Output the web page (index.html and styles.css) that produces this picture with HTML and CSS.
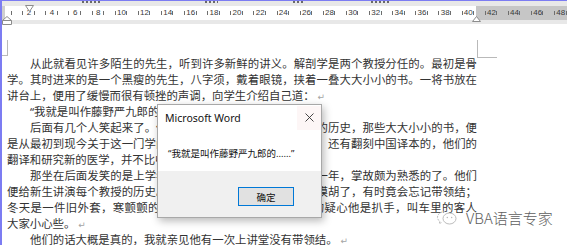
FILE: index.html
```html
<!DOCTYPE html>
<html lang="zh-CN">
<head>
  <meta charset="UTF-8">
  <meta name="viewport" content="width=device-width, initial-scale=1.0">
  <title>藤野先生 - Word</title>
  <link rel="stylesheet" href="styles.css">
</head>
<body>
  <div class="ruler">
    <div class="ribbon-cut">
      <span class="cut c1"></span>
      <span class="cut c2"></span>
      <span class="cut c3"></span>
      <span class="cut c4"></span>
    </div>
    <div class="ruler-strip">
      <div class="ruler-scale">
        <span></span><span></span><span>2</span><span></span><span>4</span><span></span><span>6</span><span></span><span>8</span><span></span>
        <span>10</span><span></span><span>12</span><span></span><span>14</span><span></span><span>16</span><span></span><span>18</span><span></span>
        <span>20</span><span></span><span>22</span><span></span><span>24</span><span></span><span>26</span><span></span><span>28</span><span></span>
        <span>30</span><span></span><span>32</span><span></span><span>34</span><span></span><span>36</span><span></span><span>38</span><span></span>
        <span>40</span><span></span><span>42</span><span></span><span>44</span><span></span><span>46</span><span></span><span>48</span>
      </div>
    </div>
    <!-- indent markers -->
    <svg class="mark first-indent" width="9" height="7" viewBox="0 0 9 7"><polygon points="0.5,0.5 8.5,0.5 4.5,6.5" fill="#fff" stroke="#8c8c8c"/></svg>
    <svg class="mark hang-indent" width="10" height="9" viewBox="0 0 10 9"><polygon points="5,0.5 9.5,4.5 9.5,8.5 0.5,8.5 0.5,4.5" fill="#fff" stroke="#8c8c8c"/><line x1="0.5" y1="4.5" x2="9.5" y2="4.5" stroke="#8c8c8c"/></svg>
    <svg class="mark right-indent" width="9" height="6" viewBox="0 0 9 6"><polygon points="4.5,0.5 8.5,5.5 0.5,5.5" fill="#fff" stroke="#8c8c8c"/></svg>
  </div>

  <div class="page">
    <div class="corners">
      <span class="corner-l"></span>
      <span class="corner-r"></span>
    </div>

    <div class="text">
      <p class="ln ind">从此就看见许多陌生的先生，听到许多新鲜的讲义。解剖学是两个教授分任的。最初是骨</p>
      <p class="ln">学。其时进来的是一个黑瘦的先生，八字须，戴着眼镜，挟着一叠大大小小的书。一将书放在</p>
      <p class="ln end">讲台上，便用了缓慢而很有顿挫的声调，向学生介绍自己道：<span class="pm">↵</span></p>
      <p class="ln ind end">“我就是叫作藤野严九郎的……”<span class="pm">↵</span></p>
      <p class="ln ind">后面有几个人笑起来了。他接着便讲述解剖学在日本发达的历史，那些大大小小的书，便</p>
      <p class="ln">是从最初到现今关于这一门学问的著作。起初有几本是线装的；还有翻刻中国译本的，他们的</p>
      <p class="ln end">翻译和研究新的医学，并不比中国早。<span class="pm">↵</span></p>
      <p class="ln ind">那坐在后面发笑的是上学年不及格的留级学生，在校已经一年，掌故颇为熟悉的了。他们</p>
      <p class="ln">便给新生讲演每个教授的历史。这藤野先生，据说是穿衣服太模胡了，有时竟会忘记带领结；</p>
      <p class="ln">冬天是一件旧外套，寒颤颤的，有一回上火车去，致使管车的疑心他是扒手，叫车里的客人</p>
      <p class="ln end">大家小心些。<span class="pm">↵</span></p>
      <p class="ln ind end">他们的话大概是真的，我就亲见他有一次上讲堂没有带领结。<span class="pm">↵</span></p>
    </div>

    <div class="msgbox">
      <div class="msgbox-title">
        <span>Microsoft Word</span>
        <button class="msgbox-close">
          <svg width="9" height="9" viewBox="0 0 9 9"><path d="M0.5 0.5 L8.5 8.5 M8.5 0.5 L0.5 8.5" stroke="#333" stroke-width="0.9" fill="none"/></svg>
        </button>
      </div>
      <div class="msgbox-body">“我就是叫作藤野严九郎的……”</div>
      <div class="msgbox-foot">
        <button class="msgbox-ok">确定</button>
      </div>
    </div>

    <div class="watermark">
      <svg width="22" height="17" viewBox="0 0 22 17">
        <path d="M9 2.5 C4.5 2.5 1.5 5.2 1.5 8.3 C1.5 10 2.4 11.5 3.8 12.5 L3.2 14.6 L5.8 13.4" fill="none" stroke="#b5b5b5" stroke-width="0.9" stroke-dasharray="2 1"/>
        <ellipse cx="13.5" cy="9.5" rx="6.5" ry="5.5" fill="#fff" stroke="#b5b5b5" stroke-width="0.9"/>
        <circle cx="11.3" cy="8.5" r="0.7" fill="#b5b5b5"/>
        <circle cx="15.7" cy="8.5" r="0.7" fill="#b5b5b5"/>
      </svg>
      <span>VBA语言专家</span>
    </div>
  </div>
</body>
</html>
```

FILE: styles.css
```css
html, body {
  height: 100%;
}
body {
  margin: 0;
  box-sizing: border-box;
  border-top: 1px solid #7c7cf2;
  border-left: 2px solid #7c7cf2;
  background-color: #fff;
  overflow: hidden;
  font-family: "Noto Sans", "Noto Sans CJK SC", sans-serif;
  color: #333;
}

/* ruler */
.ruler {
  position: relative;
  height: 23px;
  background-color: #e8e8e8;
}
.ribbon-cut {
  display: flex;
  height: 5px;
}
.cut {
  height: 2px;
  background: repeating-linear-gradient(90deg, #6a6a6a 0 2px, transparent 2px 4px);
}
.c1 { margin-left: 80px; width: 19px; }
.c2 { margin-left: 104px; width: 13px; }
.c3 { margin-left: 75px; width: 11px; }
.c4 { margin-left: 67px; width: 18px; }

.ruler-strip {
  height: 14px;
  overflow: hidden;
  background: linear-gradient(90deg, #cfcfcf 0 3px, #fff 3px 474px, #c6c6c6 474px);
}
.ruler-scale {
  display: flex;
  margin-left: -2px;
  height: 14px;
}
.ruler-scale span {
  flex: 0 0 11.575px;
  text-align: center;
  font-family: "Liberation Sans", Arial, sans-serif;
  font-size: 8px;
  line-height: 14px;
  color: #3a3a3a;
  background: linear-gradient(#6e6e6e, #6e6e6e) right center / 1px 4px no-repeat;
}
.mark {
  position: absolute;
  display: block;
}
.first-indent { left: 23px; top: 4px; }
.hang-indent { left: 0; top: 15px; }
.right-indent { left: 470px; top: 15px; }

/* page */
.page {
  position: relative;
  padding-top: 16px;
}
.corners {
  display: flex;
  justify-content: space-between;
  width: 495px;
  height: 16px;
}
.corner-l {
  width: 5px;
  height: 15px;
  border-right: 1px solid #b9b9b9;
  border-bottom: 1px solid #b9b9b9;
}
.corner-r {
  width: 19px;
  height: 17px;
  border-left: 1px solid #b9b9b9;
  border-bottom: 1px solid #b9b9b9;
}
.text {
  margin-left: 5px;
  width: 470px;
  font-size: 11.4px;
  line-height: 16px;
}
.ln {
  margin: 0;
  height: 16px;
  text-align: justify;
  text-align-last: justify;
}
.ln.end {
  text-align-last: left;
}
.ind {
  text-indent: 23px;
}
.pm {
  margin-left: 3px;
  font-family: "DejaVu Sans", sans-serif;
  font-size: 9px;
  color: #a4a4a4;
}

/* message box */
.msgbox {
  position: absolute;
  left: 155px;
  top: 80px;
  width: 163px;
  height: 112px;
  display: flex;
  flex-direction: column;
  background-color: #fff;
  border: 1px solid #a8a8a8;
  box-shadow: 2px 3px 8px rgba(0, 0, 0, 0.28);
}
.msgbox-title {
  display: flex;
  justify-content: space-between;
  align-items: center;
  height: 25px;
  padding-left: 7px;
  font-size: 10.5px;
  color: #111;
}
.msgbox-close {
  width: 24px;
  height: 24px;
  padding: 0;
  border: none;
  background-color: #fdf6f6;
  display: flex;
  align-items: center;
  justify-content: center;
}
.msgbox-body {
  flex: 1;
  display: flex;
  align-items: center;
  padding: 4px 0 0 10px;
  font-size: 9.5px;
  color: #111;
}
.msgbox-foot {
  height: 46px;
  box-sizing: border-box;
  display: flex;
  justify-content: flex-end;
  align-items: flex-start;
  padding: 16px 27px 0 0;
  background-color: #f0f0f0;
}
.msgbox-ok {
  width: 56px;
  height: 19px;
  padding: 0;
  border: 1px solid #0078d7;
  background-color: #e1e1e1;
  font-family: "Noto Sans", "Noto Sans CJK SC", sans-serif;
  font-size: 9.5px;
  color: #111;
}

/* watermark */
.watermark {
  position: absolute;
  left: 434px;
  top: 183px;
  display: flex;
  align-items: center;
  gap: 8px;
  font-family: "Noto Sans CJK SC", sans-serif;
  font-weight: 300;
  font-size: 15px;
  color: #5e5e5e;
}
```
